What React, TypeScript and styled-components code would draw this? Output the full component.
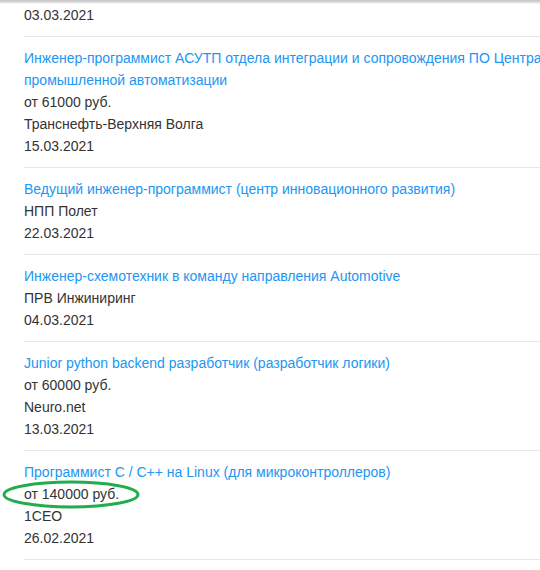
import React from "react";
import styled, { createGlobalStyle } from "styled-components";

const Global = createGlobalStyle`
  html, body { margin: 0; padding: 0; background: #fff; }
  body { overflow: hidden; width: 540px; height: 570px; }
`;

const Page = styled.div`
  position: relative;
  width: 540px;
  height: 570px;
  overflow: hidden;
  padding-left: 24px;
  box-sizing: border-box;
  font-family: "Liberation Sans", Arial, sans-serif;
  font-size: 14px;
  line-height: 22px;
  color: #333;
`;

const TopShade = styled.div`
  position: absolute;
  left: 0;
  top: 0;
  width: 100%;
  height: 4px;
  background: linear-gradient(to bottom, #c4c4c4 0%, #d6d6d6 50%, rgba(255,255,255,0) 100%);
  z-index: 2;
`;

const List = styled.ul`
  list-style: none;
  margin: -18px 0 0 0;
  padding: 0;
  width: 580px;
`;

const Item = styled.li<{ $first?: boolean }>`
  display: flex;
  flex-direction: column;
  padding: ${(p) => (p.$first ? "0 0 10px" : "10px 0 10px")};
  border-bottom: 1px solid #e6e6e6;
`;

const Title = styled.a`
  color: #2196f3;
  text-decoration: none;
  cursor: pointer;
`;

const Line = styled.div`
  color: #333;
  white-space: nowrap;
`;

const Salary = styled.span<{ $marked?: boolean }>`
  position: relative;
  display: inline-block;
`;

const Mark = styled.svg`
  position: absolute;
  left: -22px;
  top: -4px;
  width: 140px;
  height: 31px;
  overflow: visible;
  pointer-events: none;
`;

type Job = {
  title?: string;
  salary?: string;
  company: string;
  date: string;
  marked?: boolean;
};

const jobs: Job[] = [
  {
    title:
      "Инженер-программист АСУТП отдела интеграции и сопровождения ПО Центра промышленной автоматизации",
    salary: "от 61000 руб.",
    company: "Транснефть-Верхняя Волга",
    date: "15.03.2021",
  },
  {
    title: "Ведущий инженер-программист (центр инновационного развития)",
    company: "НПП Полет",
    date: "22.03.2021",
  },
  {
    title: "Инженер-схемотехник в команду направления Automotive",
    company: "ПРВ Инжиниринг",
    date: "04.03.2021",
  },
  {
    title: "Junior python backend разработчик (разработчик логики)",
    salary: "от 60000 руб.",
    company: "Neuro.net",
    date: "13.03.2021",
  },
  {
    title: "Программист С / С++ на Linux (для микроконтроллеров)",
    salary: "от 140000 руб.",
    company: "1CEO",
    date: "26.02.2021",
    marked: true,
  },
];

export default function App() {
  return (
    <>
      <Global />
      <Page>
        <TopShade />
        <List>
          <Item $first>
            <Line>Группа компаний «Рубеж»</Line>
            <Line>03.03.2021</Line>
          </Item>
          {jobs.map((j, i) => (
            <Item key={i}>
              <Title>{j.title}</Title>
              {j.salary && (
                <Line>
                  <Salary $marked={j.marked}>
                    {j.salary}
                    {j.marked && (
                      <Mark viewBox="0 0 140 31">
                        <ellipse
                          cx="69"
                          cy="15.5"
                          rx="67"
                          ry="12.5"
                          fill="none"
                          stroke="#1fae4b"
                          strokeWidth="3"
                        />
                      </Mark>
                    )}
                  </Salary>
                </Line>
              )}
              <Line>{j.company}</Line>
              <Line>{j.date}</Line>
            </Item>
          ))}
        </List>
      </Page>
    </>
  );
}
